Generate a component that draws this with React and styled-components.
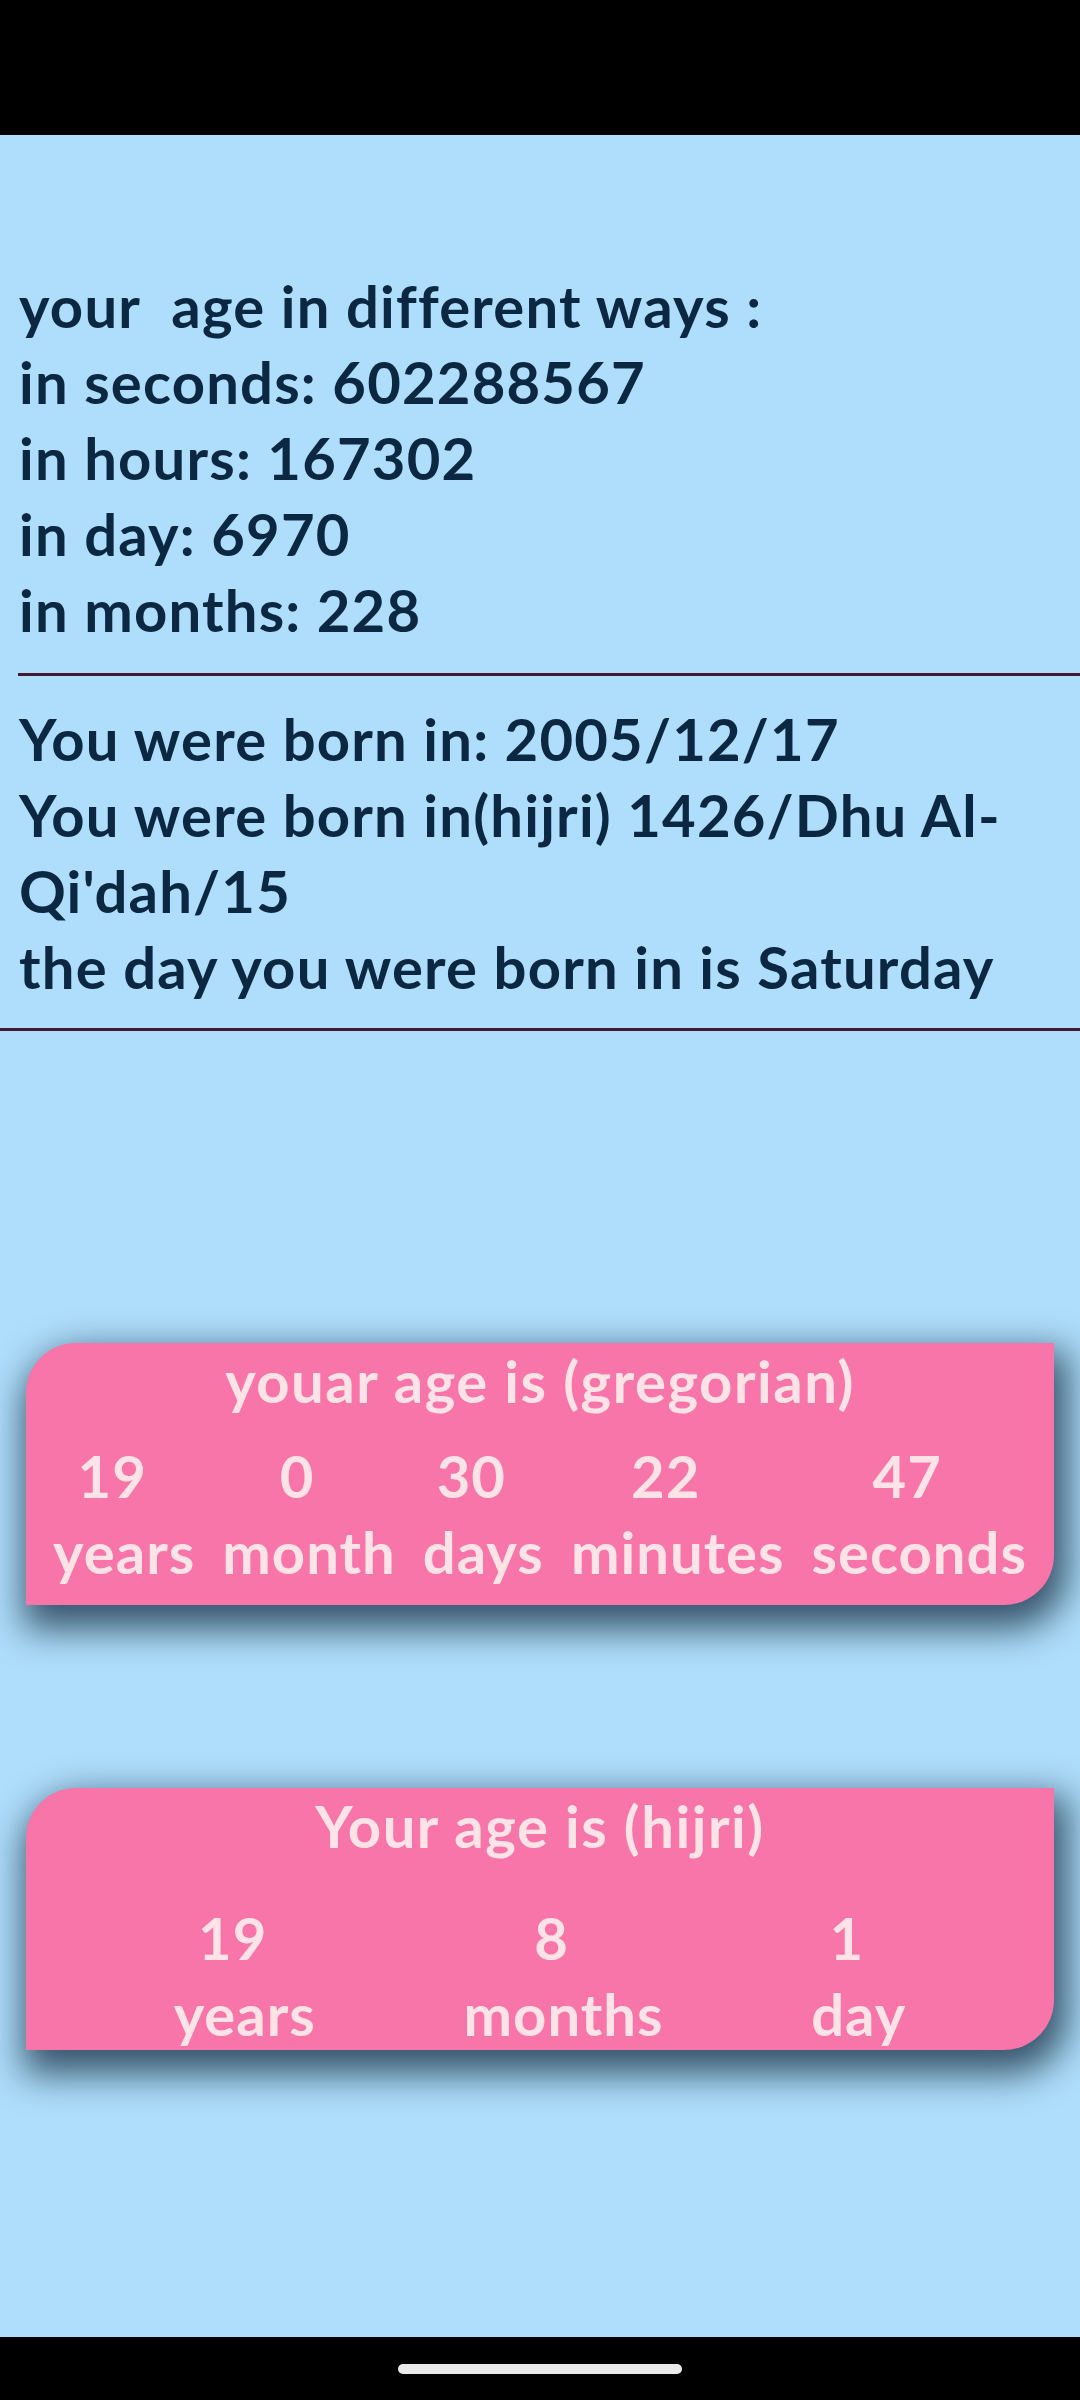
import React from 'react';
import styled, { createGlobalStyle } from 'styled-components';

const GlobalStyle = createGlobalStyle`
  body {
    margin: 0;
    background: #000;
    font-family: Lato, "Noto Sans", sans-serif;
  }
`;

const Screen = styled.div`
  width: 1080px;
  height: 2400px;
  display: flex;
  flex-direction: column;
  background: #000;
`;

const StatusBar = styled.div`
  height: 135px;
  flex-shrink: 0;
  background: #000;
`;

const Content = styled.div`
  flex: 1;
  background: #aedefb;
  padding-top: 133px;
  display: flex;
  flex-direction: column;
`;

const Section = styled.div`
  margin-left: ${(p) => (p.$inset ? '18px' : '0')};
  padding: 0 0 ${(p) => p.$padBottom}px ${(p) => (p.$inset ? '1px' : '19px')};
  padding-top: ${(p) => p.$padTop || 0}px;
  border-bottom: 3px solid #45182f;
`;

const Line = styled.div`
  font-size: 58px;
  font-weight: 700;
  letter-spacing: 1.2px;
  line-height: 76px;
  color: #0b2742;
`;

const Card = styled.div`
  margin: ${(p) => p.$top}px 26px 0 26px;
  height: 262px;
  background: #f775a8;
  border-radius: 50px 0 50px 0;
  box-shadow: 6px 16px 36px 8px rgba(5, 25, 45, 0.7);
  color: #ffe3e6;
  font-size: 58px;
  font-weight: 700;
  letter-spacing: 1px;
  line-height: 76px;
  display: flex;
  flex-direction: column;
`;

const CardTitle = styled.div`
  text-align: center;
  letter-spacing: 1.5px;
  margin-bottom: ${(p) => p.$gap}px;
`;

const Units = styled.div`
  display: flex;
  justify-content: space-evenly;
`;

const Unit = styled.div`
  display: flex;
  flex-direction: column;
  align-items: center;
`;

const Num = styled.span`
  padding-right: 24px;
`;

const Label = styled.span``;

const NavBar = styled.div`
  height: 63px;
  flex-shrink: 0;
  background: #000;
  display: flex;
  justify-content: center;
  padding-top: 27px;
  box-sizing: border-box;
`;

const Pill = styled.div`
  width: 284px;
  height: 10px;
  border-radius: 5px;
  background: #eaeaea;
`;

const gregorian = [
  ['19', 'years'],
  ['0', 'month'],
  ['30', 'days'],
  ['22', 'minutes'],
  ['47', 'seconds'],
];

const hijri = [
  ['19', 'years'],
  ['8', 'months'],
  ['1', 'day'],
];

const AgeCard = ({ title, items, top, gap }) => (
  <Card $top={top}>
    <CardTitle $gap={gap}>{title}</CardTitle>
    <Units>
      {items.map(([n, l]) => (
        <Unit key={l}>
          <Num>{n}</Num>
          <Label>{l}</Label>
        </Unit>
      ))}
    </Units>
  </Card>
);

const App = () => (
  <Screen>
    <GlobalStyle />
    <StatusBar />
    <Content>
      <Section $inset $padBottom={25}>
        <Line>your{'\u2002'}age in different ways :</Line>
        <Line>in seconds: 602288567</Line>
        <Line>in hours: 167302</Line>
        <Line>in day: 6970</Line>
        <Line>in months: 228</Line>
      </Section>
      <Section $padTop={25} $padBottom={23}>
        <Line>You were born in: 2005/12/17</Line>
        <Line>You were born in(hijri) 1426/Dhu Al-Qi'dah/15</Line>
        <Line>the day you were born in is Saturday</Line>
      </Section>
      <AgeCard title="youar age is (gregorian)" items={gregorian} top={312} gap={19} />
      <AgeCard title="Your age is (hijri)" items={hijri} top={183} gap={36} />
    </Content>
    <NavBar>
      <Pill />
    </NavBar>
  </Screen>
);

export default App;
